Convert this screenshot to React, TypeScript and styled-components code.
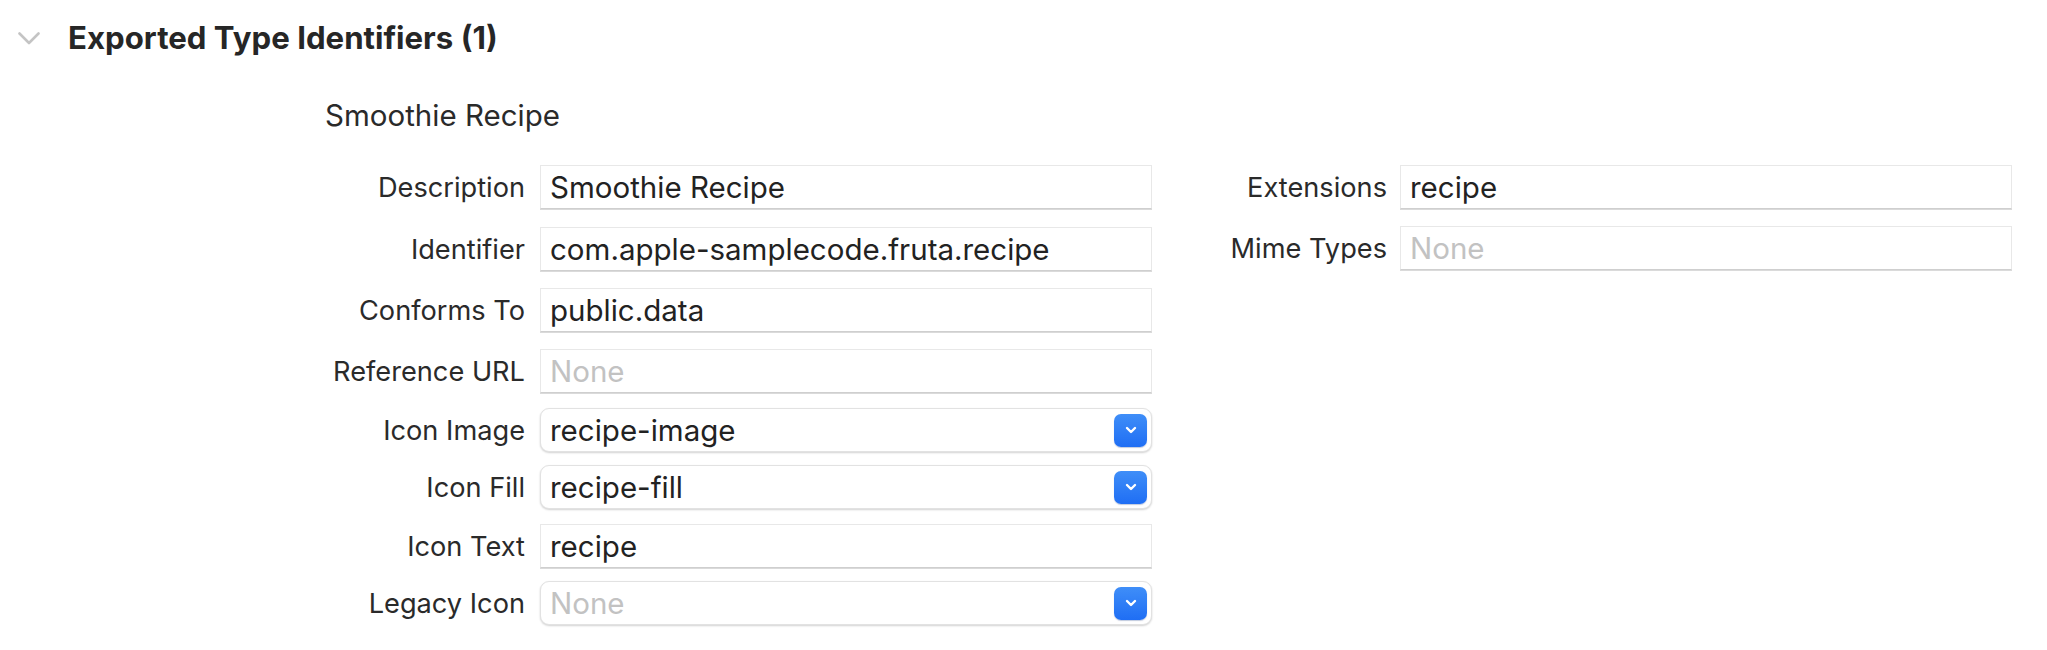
import React from "react";
import styled, { createGlobalStyle } from "styled-components";

const GlobalStyle = createGlobalStyle`
  html, body {
    margin: 0;
    padding: 0;
    background: #ffffff;
  }
  body {
    font-family: Inter, "Noto Sans", "Liberation Sans", sans-serif;
    color: #262626;
    -webkit-font-smoothing: antialiased;
  }
`;

const Page = styled.div`
  width: 2047px;
  height: 650px;
  overflow: hidden;
  background: #ffffff;
`;

const Header = styled.div`
  display: flex;
  align-items: center;
  height: 76px;
  padding-left: 18px;
`;

const Disclosure = styled.svg`
  width: 22px;
  height: 13px;
  margin-right: 28px;
  flex-shrink: 0;
`;

const Title = styled.h2`
  margin: 0;
  font-size: 31.2px;
  font-weight: 700;
  color: #262626;
`;

const Body = styled.div`
  padding-top: 19px;
  padding-left: 285px;
`;

const Subtitle = styled.div`
  padding-left: 40px;
  font-size: 29.5px;
  line-height: 40px;
  color: #2a2a2a;
`;

const Columns = styled.div`
  display: flex;
  gap: 12px;
  margin-top: 30px;
`;

const Group = styled.div`
  display: flex;
  flex-direction: column;
`;

const Row = styled.div<{ $top: number; $labelWidth: number; $gap: number }>`
  display: grid;
  grid-template-columns: ${({ $labelWidth }) => $labelWidth}px 612px;
  column-gap: ${({ $gap }) => $gap}px;
  align-items: center;
  height: 44px;
  margin-top: ${({ $top }) => $top}px;
`;

const Label = styled.label`
  text-align: right;
  font-size: 27.2px;
  color: #2a2a2a;
  white-space: nowrap;
`;

const TextBox = styled.div<{ $placeholder?: boolean }>`
  box-sizing: border-box;
  height: 44px;
  display: flex;
  align-items: center;
  padding: 0 9px;
  border: 1px solid #e8e8e8;
  border-bottom-color: #cfcfcf;
  box-shadow: 0 1px 0 #dadada;
  background: #ffffff;
  font-size: 29.5px;
  color: ${({ $placeholder }) => ($placeholder ? "#c2c2c2" : "#222222")};
  white-space: nowrap;
  overflow: hidden;
`;

const PopUp = styled.div<{ $placeholder?: boolean }>`
  box-sizing: border-box;
  height: 44px;
  display: flex;
  align-items: center;
  justify-content: space-between;
  padding: 0 4px 0 9px;
  border-radius: 9px;
  border: 1px solid #e2e2e2;
  box-shadow: 0 1px 2px rgba(0, 0, 0, 0.18);
  background: #ffffff;
  font-size: 29.5px;
  color: ${({ $placeholder }) => ($placeholder ? "#c2c2c2" : "#222222")};
  white-space: nowrap;
`;

const PopButton = styled.span`
  width: 33px;
  height: 33px;
  border-radius: 7px;
  background: linear-gradient(#3f8ef8, #1f6ef4);
  box-shadow: 0 1px 1px rgba(0, 40, 120, 0.25);
  display: flex;
  align-items: center;
  justify-content: center;
  flex-shrink: 0;
`;

type Field = {
  label: string;
  value?: string;
  kind: "text" | "popup";
  top: number;
};

const leftFields: Field[] = [
  { label: "Description", value: "Smoothie Recipe", kind: "text", top: 0 },
  { label: "Identifier", value: "com.apple-samplecode.fruta.recipe", kind: "text", top: 18 },
  { label: "Conforms To", value: "public.data", kind: "text", top: 17 },
  { label: "Reference URL", kind: "text", top: 17 },
  { label: "Icon Image", value: "recipe-image", kind: "popup", top: 15 },
  { label: "Icon Fill", value: "recipe-fill", kind: "popup", top: 13 },
  { label: "Icon Text", value: "recipe", kind: "text", top: 15 },
  { label: "Legacy Icon", kind: "popup", top: 13 },
];

const rightFields: Field[] = [
  { label: "Extensions", value: "recipe", kind: "text", top: 0 },
  { label: "Mime Types", kind: "text", top: 17 },
];

const Control = ({ field }: { field: Field }) => {
  const text = field.value ?? "None";
  if (field.kind === "popup") {
    return (
      <PopUp $placeholder={!field.value}>
        {text}
        <PopButton>
          <svg width="12" height="8" viewBox="0 0 12 8">
            <polyline
              points="2,2 6,6 10,2"
              fill="none"
              stroke="#ffffff"
              strokeWidth="2.4"
              strokeLinecap="round"
              strokeLinejoin="round"
            />
          </svg>
        </PopButton>
      </PopUp>
    );
  }
  return <TextBox $placeholder={!field.value}>{text}</TextBox>;
};

export default function App() {
  return (
    <Page>
      <GlobalStyle />
      <Header>
        <Disclosure viewBox="0 0 22 13">
          <polyline
            points="1.5,1.5 11,11 20.5,1.5"
            fill="none"
            stroke="#c4c4c4"
            strokeWidth="2.6"
            strokeLinecap="round"
            strokeLinejoin="round"
          />
        </Disclosure>
        <Title>Exported Type Identifiers (1)</Title>
      </Header>
      <Body>
        <Subtitle>Smoothie Recipe</Subtitle>
        <Columns>
          <Group>
            {leftFields.map((f) => (
              <Row key={f.label} $top={f.top} $labelWidth={240} $gap={15}>
                <Label>{f.label}</Label>
                <Control field={f} />
              </Row>
            ))}
          </Group>
          <Group>
            {rightFields.map((f) => (
              <Row key={f.label} $top={f.top} $labelWidth={223} $gap={13}>
                <Label>{f.label}</Label>
                <Control field={f} />
              </Row>
            ))}
          </Group>
        </Columns>
      </Body>
    </Page>
  );
}
